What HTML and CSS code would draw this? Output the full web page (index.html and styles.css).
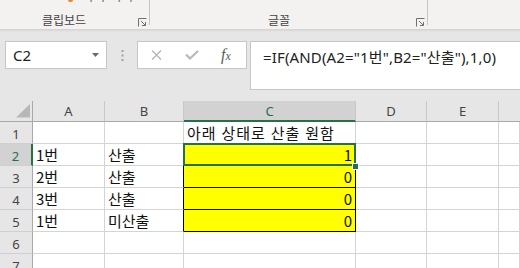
FILE: index.html
```html
<!DOCTYPE html>
<html lang="ko">
<head>
<meta charset="utf-8">
<title>Excel</title>
<link rel="stylesheet" href="styles.css">
</head>
<body>
<div class="ribbon">
  <div class="group g-clip">
    <div class="cutoff"><span class="brush"></span><span class="cut-text">서식 복사</span></div>
    <div class="group-foot">
      <span class="group-label">클립보드</span>
      <svg class="launcher" width="9" height="9" viewBox="0 0 9 9"><path d="M0.5 8.5V0.5H8.5M3 3L7.5 7.5M7.5 4V7.5H4" fill="none" stroke="#707070" stroke-width="1"/></svg>
    </div>
  </div>
  <div class="group g-font">
    <div class="group-foot">
      <span class="group-label">글꼴</span>
      <svg class="launcher" width="9" height="9" viewBox="0 0 9 9"><path d="M0.5 8.5V0.5H8.5M3 3L7.5 7.5M7.5 4V7.5H4" fill="none" stroke="#707070" stroke-width="1"/></svg>
    </div>
  </div>
  <div class="group g-rest"></div>
</div>
<div class="ribbon-shadow"></div>
<div class="fbar">
  <div class="namebox">
    <span>C2</span>
    <svg class="nb-arrow" width="7" height="4" viewBox="0 0 7 4"><path d="M0 0H7L3.5 4Z" fill="#6a6a6a"/></svg>
  </div>
  <div class="dots">
    <svg width="3" height="11" viewBox="0 0 3 11"><rect x="0.5" y="0" width="2" height="2" fill="#a0a0a0"/><rect x="0.5" y="4.5" width="2" height="2" fill="#a0a0a0"/><rect x="0.5" y="9" width="2" height="2" fill="#a0a0a0"/></svg>
  </div>
  <div class="fxbox">
    <svg class="ic-x" width="11" height="10" viewBox="0 0 11 10"><path d="M1 0.5L10 9.5M10 0.5L1 9.5" stroke="#b9b9b9" stroke-width="1.5" fill="none"/></svg>
    <svg class="ic-ok" width="14" height="10" viewBox="0 0 14 10"><path d="M1 4.5L5 8.5L13 1" stroke="#b9b9b9" stroke-width="2.2" fill="none"/></svg>
    <span class="ic-fx"><i class="f">f</i><i class="x">x</i></span>
  </div>
  <div class="formula">=IF(AND(A2="1번",B2="산출"),1,0)</div>
</div>
<div class="sheet">
  <div class="corner"><svg width="33" height="21" viewBox="0 0 33 21"><path d="M16 16.5H30V3Z" fill="#b7b7b7"/></svg></div>
  <div class="h ch">A</div>
  <div class="h ch">B</div>
  <div class="h ch sel-col">C</div>
  <div class="h ch">D</div>
  <div class="h ch">E</div>
  <div class="h ch last"></div>

  <div class="h rh">1</div>
  <div class="c"></div>
  <div class="c"></div>
  <div class="c top-black">아래 상태로 산출 원함</div>
  <div class="c"></div>
  <div class="c"></div>
  <div class="c"></div>

  <div class="h rh sel-row">2</div>
  <div class="c">1번</div>
  <div class="c right-black">산출</div>
  <div class="c yel num">1</div>
  <div class="c"></div>
  <div class="c"></div>
  <div class="c"></div>

  <div class="h rh">3</div>
  <div class="c">2번</div>
  <div class="c right-black">산출</div>
  <div class="c yel num">0</div>
  <div class="c"></div>
  <div class="c"></div>
  <div class="c"></div>

  <div class="h rh">4</div>
  <div class="c">3번</div>
  <div class="c right-black">산출</div>
  <div class="c yel num">0</div>
  <div class="c"></div>
  <div class="c"></div>
  <div class="c"></div>

  <div class="h rh">5</div>
  <div class="c">1번</div>
  <div class="c right-black">미산출</div>
  <div class="c yel num">0</div>
  <div class="c"></div>
  <div class="c"></div>
  <div class="c"></div>

  <div class="h rh">6</div>
  <div class="c"></div>
  <div class="c"></div>
  <div class="c"></div>
  <div class="c"></div>
  <div class="c"></div>
  <div class="c"></div>

  <div class="h rh">7</div>
  <div class="c"></div>
  <div class="c"></div>
  <div class="c"></div>
  <div class="c"></div>
  <div class="c"></div>
  <div class="c"></div>

  <div class="selection"></div>
  <div class="fill-handle"></div>
</div>
</body>
</html>
```
FILE: styles.css
```css
html, body {
  margin: 0;
  padding: 0;
}
body {
  width: 520px;
  height: 268px;
  overflow: hidden;
  background: #e6e6e6;
  font-family: "Noto Sans", "Noto Sans CJK KR", sans-serif;
  color: #222;
}

/* Ribbon */
.ribbon {
  display: flex;
  height: 29px;
  background: #f3f2f1;
}
.group {
  position: relative;
  height: 29px;
  display: flex;
  flex-direction: column;
  box-sizing: border-box;
}
.group::after {
  content: "";
  position: absolute;
  right: 0;
  top: 0;
  width: 1px;
  height: 25px;
  background: #c8c6c4;
}
.g-clip { width: 150px; }
.g-font { width: 278px; }
.g-rest { flex: 1; }
.g-rest::after { display: none; }

.cutoff {
  height: 2px;
  overflow: hidden;
  display: flex;
  align-items: flex-end;
  padding-left: 68px;
  gap: 9px;
}
.brush {
  width: 5px;
  height: 2px;
  background: #e8892b;
  border-radius: 0 0 3px 3px;
}
.cut-text {
  font: 12px/12px "Noto Sans CJK KR", sans-serif;
  color: #666;
  margin-bottom: 0;
  letter-spacing: 1px;
}
.group-foot {
  margin-top: auto;
  height: 16px;
  padding-bottom: 1px;
  display: flex;
  align-items: center;
}
.group-label {
  font: 12px/16px "Noto Sans CJK KR", sans-serif;
  color: #444;
}
.g-clip .group-label { margin-left: 42px; }
.g-font .group-label { margin-left: 118px; }
.launcher {
  margin-left: auto;
  margin-right: 3px;
  align-self: flex-end;
  margin-bottom: 1px;
}
.ribbon-shadow {
  height: 3px;
  background: linear-gradient(#d2d2d2, #e6e6e6);
}

/* Formula bar */
.fbar {
  height: 69px;
  box-sizing: border-box;
  padding-top: 9px;
  display: flex;
  align-items: flex-start;
}
.namebox {
  margin-left: 5px;
  width: 102px;
  height: 28px;
  box-sizing: border-box;
  background: #fff;
  border: 1px solid #c6c6c6;
  display: flex;
  align-items: center;
  padding: 0 7px 0 7px;
  font-size: 15px;
  color: #222;
}
.nb-arrow { margin-left: auto; }
.dots {
  width: 30px;
  height: 28px;
  display: flex;
  align-items: center;
  justify-content: center;
}
.fxbox {
  width: 110px;
  height: 28px;
  box-sizing: border-box;
  background: #fff;
  border: 1px solid #c6c6c6;
  display: flex;
  align-items: center;
}
.ic-x { margin-left: 13px; }
.ic-ok { margin-left: 23px; }
.ic-fx {
  margin-left: 22px;
  font-family: "Liberation Serif", "DejaVu Serif", serif;
  color: #5a5a5a;
  display: flex;
  align-items: baseline;
}
.ic-fx .f { font-size: 16px; }
.ic-fx .x { font-size: 12px; margin-left: 0; }
.formula {
  flex: 1;
  margin-left: 3px;
  height: 49px;
  box-sizing: border-box;
  background: #fff;
  border: 1px solid #c6c6c6;
  border-right: none;
  padding: 5px 0 0 12px;
  font-size: 15px;
  line-height: 20px;
  letter-spacing: 0.15px;
  color: #222;
  white-space: nowrap;
}

/* Sheet */
.sheet {
  position: relative;
  display: grid;
  grid-template-columns: 33px 72px 79px 172px 71px 72px 21px;
  grid-template-rows: 21px repeat(7, 22px);
  background: #fff;
}
.corner {
  background: #e6e6e6;
  border-right: 1px solid #a9a9a9;
  border-bottom: 1px solid #a9a9a9;
  box-sizing: border-box;
}
.corner svg { display: block; }
.h {
  box-sizing: border-box;
  background: #e6e6e6;
  display: flex;
  align-items: center;
  justify-content: center;
  font-size: 13px;
  color: #444;
}
.ch {
  border-right: 1px solid #c8c8c8;
  border-bottom: 1px solid #a9a9a9;
}
.ch.last { border-right: none; }
.rh {
  border-right: 1px solid #a9a9a9;
  border-bottom: 1px solid #cfcfcf;
  padding-top: 2px;
}
.sel-col {
  background: #d2d2d2;
  color: #217346;
  border-bottom: 2px solid #217346;
}
.sel-row {
  background: #d2d2d2;
  color: #217346;
  border-right: 2px solid #217346;
}
.c {
  box-sizing: border-box;
  border-right: 1px solid #d4d4d4;
  border-bottom: 1px solid #d4d4d4;
  padding: 0 0 0 3px;
  display: flex;
  align-items: center;
  font: 15px/20px "Noto Sans CJK KR", sans-serif;
  color: #111;
  white-space: nowrap;
  overflow: visible;
}
.top-black { border-bottom-color: #000; letter-spacing: 0.9px; }
.right-black { border-right-color: #000; }
.yel {
  background: #ffff00;
  border-right-color: #000;
  border-bottom-color: #000;
}
.num {
  justify-content: flex-end;
  padding: 0 3px 0 0;
}
.selection {
  position: absolute;
  left: 183px;
  top: 42px;
  width: 173px;
  height: 23px;
  box-sizing: border-box;
  border: 2px solid #217346;
  pointer-events: none;
}
.fill-handle {
  position: absolute;
  left: 352px;
  top: 62px;
  width: 5px;
  height: 5px;
  background: #217346;
  border: 1px solid #fff;
}
```
